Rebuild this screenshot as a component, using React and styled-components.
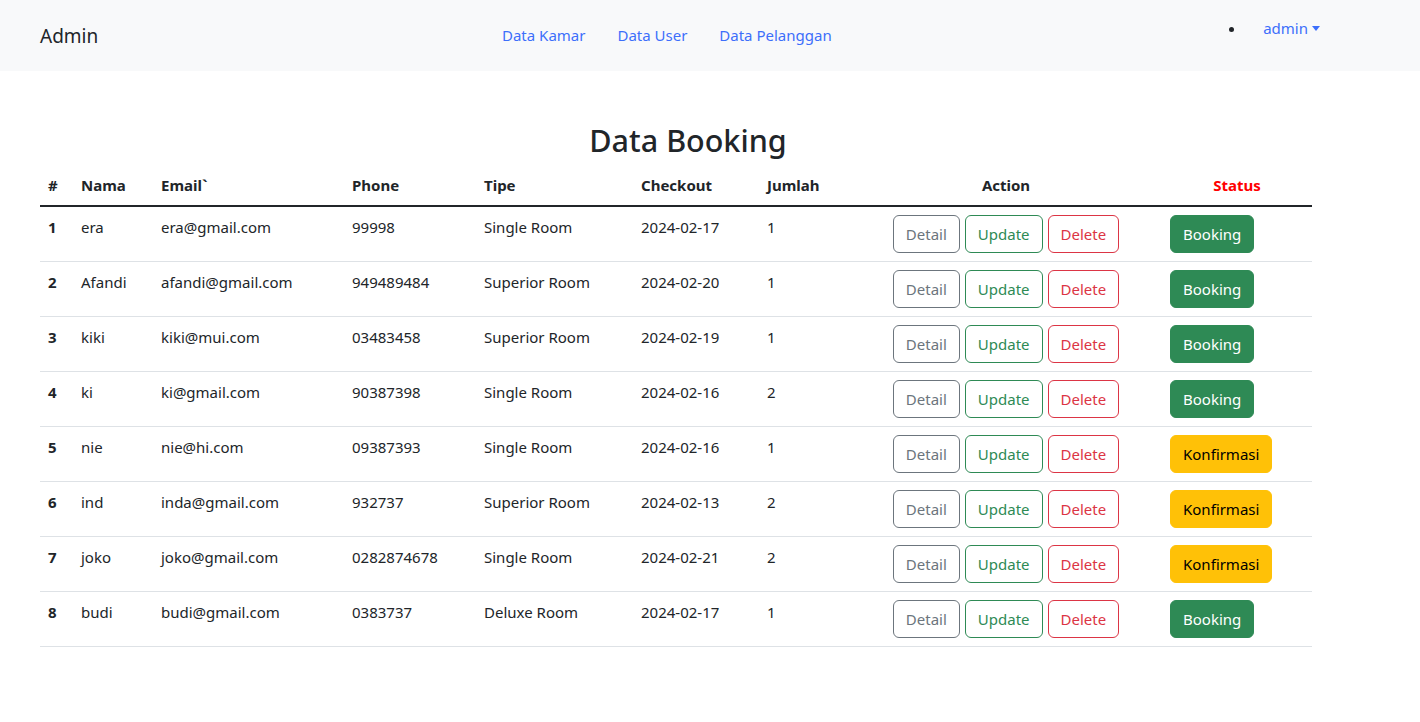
import styled, { createGlobalStyle } from "styled-components";

const GlobalStyle = createGlobalStyle`
  * { box-sizing: border-box; }
  body {
    margin: 0;
    background: #fff;
    color: #212529;
    font-family: "Noto Sans", "Open Sans", sans-serif;
    font-size: 15px;
    line-height: 24px;
  }
`;

const bookings = [
  { id: 1, nama: "era", email: "era@gmail.com", phone: "99998", tipe: "Single Room", checkout: "2024-02-17", jumlah: 1, status: "Booking" },
  { id: 2, nama: "Afandi", email: "afandi@gmail.com", phone: "949489484", tipe: "Superior Room", checkout: "2024-02-20", jumlah: 1, status: "Booking" },
  { id: 3, nama: "kiki", email: "kiki@mui.com", phone: "03483458", tipe: "Superior Room", checkout: "2024-02-19", jumlah: 1, status: "Booking" },
  { id: 4, nama: "ki", email: "ki@gmail.com", phone: "90387398", tipe: "Single Room", checkout: "2024-02-16", jumlah: 2, status: "Booking" },
  { id: 5, nama: "nie", email: "nie@hi.com", phone: "09387393", tipe: "Single Room", checkout: "2024-02-16", jumlah: 1, status: "Konfirmasi" },
  { id: 6, nama: "ind", email: "inda@gmail.com", phone: "932737", tipe: "Superior Room", checkout: "2024-02-13", jumlah: 2, status: "Konfirmasi" },
  { id: 7, nama: "joko", email: "joko@gmail.com", phone: "0282874678", tipe: "Single Room", checkout: "2024-02-21", jumlah: 2, status: "Konfirmasi" },
  { id: 8, nama: "budi", email: "budi@gmail.com", phone: "0383737", tipe: "Deluxe Room", checkout: "2024-02-17", jumlah: 1, status: "Booking" },
];

const colWidths = [33, 80, 191, 132, 157, 126, 91, 312, 150];

const App = () => {
  return (
    <>
      <GlobalStyle />
      <Navbar>
        <Brand>Admin</Brand>
        <NavLinks>
          <NavLink href="#">Data Kamar</NavLink>
          <NavLink href="#">Data User</NavLink>
          <NavLink href="#">Data Pelanggan</NavLink>
        </NavLinks>
        <UserMenu>
          <li>
            <DropdownToggle href="#">admin</DropdownToggle>
          </li>
        </UserMenu>
      </Navbar>

      <Main>
        <Title>Data Booking</Title>
        <Table>
          <colgroup>
            {colWidths.map((w, i) => (
              <col key={i} style={{ width: w }} />
            ))}
          </colgroup>
          <thead>
            <tr>
              <HeadCell>#</HeadCell>
              <HeadCell>Nama</HeadCell>
              <HeadCell>Email`</HeadCell>
              <HeadCell>Phone</HeadCell>
              <HeadCell>Tipe</HeadCell>
              <HeadCell>Checkout</HeadCell>
              <HeadCell>Jumlah</HeadCell>
              <HeadCell $center>Action</HeadCell>
              <HeadCell $center $red>Status</HeadCell>
            </tr>
          </thead>
          <tbody>
            {bookings.map((b) => (
              <tr key={b.id}>
                <RowHead>{b.id}</RowHead>
                <Cell>{b.nama}</Cell>
                <Cell>{b.email}</Cell>
                <Cell>{b.phone}</Cell>
                <Cell>{b.tipe}</Cell>
                <Cell>{b.checkout}</Cell>
                <Cell>{b.jumlah}</Cell>
                <Cell>
                  <Actions>
                    <OutlineButton $color="#6c757d">Detail</OutlineButton>
                    <OutlineButton $color="#2e8a55">Update</OutlineButton>
                    <OutlineButton $color="#dc3545">Delete</OutlineButton>
                  </Actions>
                </Cell>
                <Cell>
                  <StatusButton $warning={b.status === "Konfirmasi"}>
                    {b.status}
                  </StatusButton>
                </Cell>
              </tr>
            ))}
          </tbody>
        </Table>
      </Main>
    </>
  );
};

const Navbar = styled.nav`
  display: flex;
  align-items: center;
  height: 71px;
  padding: 0 40px;
  background: #f8f9fa;
`;

const Brand = styled.a`
  flex: 0 0 446px;
  font-size: 19px;
  color: #212529;
  text-decoration: none;
`;

const NavLinks = styled.div`
  display: flex;
  align-items: center;
  margin-bottom: 1px;
`;

const NavLink = styled.a`
  padding: 8px 16px;
  color: #3d6ffb;
  text-decoration: none;
`;

const UserMenu = styled.ul`
  margin: 0 52px 16px auto;
  padding-left: 32px;
  list-style: disc;
`;

const DropdownToggle = styled.a`
  display: inline-block;
  padding: 0 8px 0 17px;
  color: #3d6ffb;
  text-decoration: none;

  &::after {
    content: "";
    display: inline-block;
    margin-left: 4px;
    vertical-align: 3px;
    border-top: 5px solid;
    border-right: 4px solid transparent;
    border-left: 4px solid transparent;
  }
`;

const Main = styled.main`
  padding: 50px 40px 0;
`;

const Title = styled.h2`
  width: 1296px;
  margin: 0 0 6px;
  text-align: center;
  font-size: 30.5px;
  font-weight: 500;
  line-height: 38px;
`;

const Table = styled.table`
  width: 1272px;
  table-layout: fixed;
  border-collapse: collapse;
`;

const HeadCell = styled.th`
  padding: 8px;
  vertical-align: top;
  font-weight: 700;
  text-align: ${(p) => (p.$center ? "center" : "left")};
  color: ${(p) => (p.$red ? "#ff0000" : "#212529")};
  border-bottom: 2px solid #212529;
  white-space: nowrap;
`;

const Cell = styled.td`
  padding: 8px;
  vertical-align: top;
  border-bottom: 1px solid #dee2e6;
  white-space: nowrap;
`;

const RowHead = styled(Cell).attrs({ as: "th" })`
  text-align: left;
  font-weight: 700;
`;

const Actions = styled.div`
  display: flex;
  justify-content: center;
  gap: 5px;
`;

const OutlineButton = styled.button`
  padding: 6px 12px;
  font-family: inherit;
  font-size: 15px;
  line-height: 24px;
  color: ${(p) => p.$color};
  background: transparent;
  border: 1px solid ${(p) => p.$color};
  border-radius: 6px;
  cursor: pointer;
`;

const StatusButton = styled.button`
  padding: 6px 12px;
  font-family: inherit;
  font-size: 15px;
  line-height: 24px;
  color: ${(p) => (p.$warning ? "#000" : "#fff")};
  background: ${(p) => (p.$warning ? "#ffc107" : "#2e8a55")};
  border: 1px solid ${(p) => (p.$warning ? "#ffc107" : "#2e8a55")};
  border-radius: 6px;
  cursor: pointer;
`;

export default App;
